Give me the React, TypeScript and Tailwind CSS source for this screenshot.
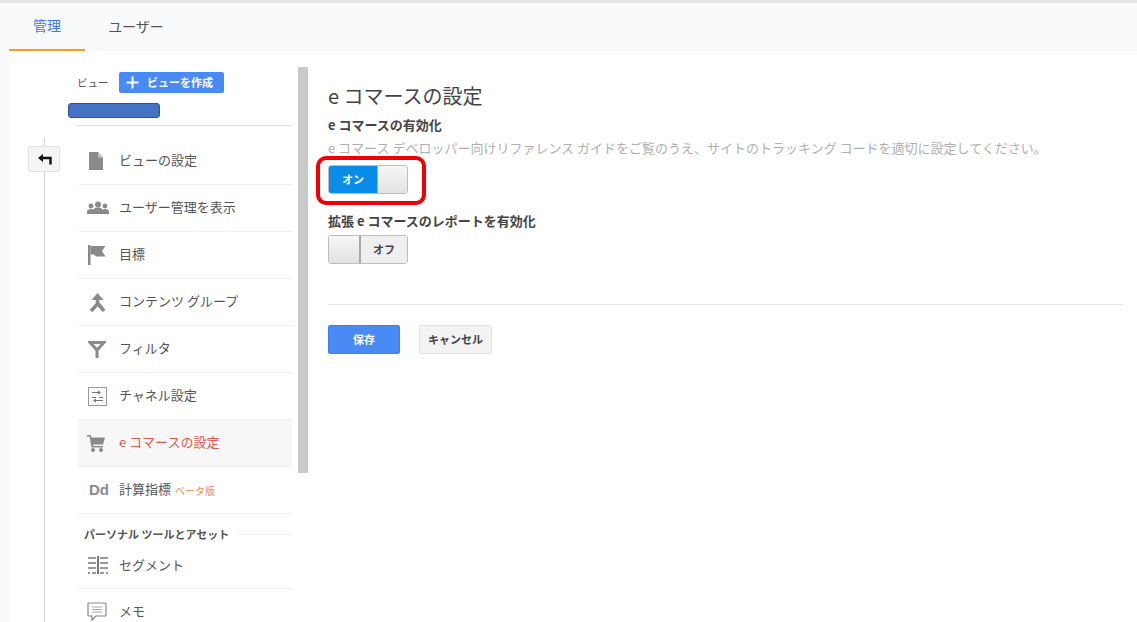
const font = '[font-family:"Noto_Sans_CJK_JP","Liberation_Sans",sans-serif]'

function DocIcon() {
  return (
    <svg width="18" height="18" viewBox="0 0 18 18" fill="#8a8a8a">
      <path d="M2 0h9l5 5.5V18H2z" />
      <path d="M11 0v5.5h5z" fill="#c4c4c4" />
    </svg>
  )
}

function PeopleIcon() {
  return (
    <svg width="22" height="16" viewBox="0 0 22 16" fill="#8a8a8a">
      <circle cx="4" cy="6" r="2.4" />
      <circle cx="11" cy="4.5" r="3" />
      <circle cx="18" cy="6" r="2.4" />
      <path d="M0 14v-2.500C0 10 2 9 4 9s4 1 4 2.500V14zM6 14v-3c0-2 2.500-3.500 5-3.500s5 1.500 5 3.500v3zM14 14v-2.500C14 10 16 9 18 9s4 1 4 2.500V14z" />
    </svg>
  )
}

function FlagIcon() {
  return (
    <svg className="ml-[1px]" width="18" height="20" viewBox="0 0 18 20" fill="#8a8a8a">
      <path d="M0 0h2.500v20H0z" />
      <path d="M2.500 1h15l-3.500 5 3.500 5.500H8l-2-2H2.500z" />
    </svg>
  )
}

function MergeIcon() {
  return (
    <svg className="ml-[2px]" width="17" height="19" viewBox="0 0 17 19" fill="none" stroke="#8a8a8a" strokeWidth="3.600">
      <path d="M8.500 5v6L2 18" />
      <path d="M8.500 10l6.500 8" />
      <path d="M8.500 0L14.500 7H2.500z" fill="#8a8a8a" stroke="none" />
    </svg>
  )
}

function FilterIcon() {
  return (
    <svg className="ml-[1px]" width="18" height="17" viewBox="0 0 18 17" fill="none" stroke="#8a8a8a" strokeWidth="3">
      <path d="M2 1.500h14L9 9z" />
      <path d="M9 8v9" />
    </svg>
  )
}

function ChannelIcon() {
  return (
    <svg className="ml-[1px]" width="19" height="19" viewBox="0 0 19 19" fill="none" stroke="#777" strokeWidth="1">
      <rect x="0.500" y="0.500" width="18" height="18" fill="#fafafa" stroke="#999" />
      <path d="M4 5.500h6M8 13.500h7M4 10.500h4M11 10.500h4" strokeWidth="1.200" />
      <path d="M10 3.500l3 2-3 2zM8 11.500l-3 2 3 2z" fill="#777" stroke="none" />
    </svg>
  )
}

function CartIcon() {
  return (
    <svg width="18" height="17" viewBox="0 0 18 17" fill="#8a8a8a">
      <path d="M0 0h3.500l1 2.500H18l-2 7H6l.4 1.500H16v1.500H4.500L2.500 1.500H0z" />
      <circle cx="6" cy="15" r="2" />
      <circle cx="14" cy="15" r="2" />
    </svg>
  )
}

function SegmentIcon() {
  return (
    <svg className="ml-[1px]" width="20" height="18" viewBox="0 0 20 18" fill="none" stroke="#777" strokeWidth="1.500">
      <path d="M10 0v18" strokeWidth="2" />
      <path d="M0 2h8M0 7h8M0 12h8M12 2h8M12 7h8M12 12h8" />
      <path d="M0 17h2M4 17h4M12 17h4M18 17h2" />
    </svg>
  )
}

function MemoIcon() {
  return (
    <svg width="20" height="20" viewBox="0 0 20 20" fill="none" stroke="#888" strokeWidth="1.200">
      <path d="M2 1h16a1 1 0 0 1 1 1v11a1 1 0 0 1-1 1H9l-4 4v-4H2a1 1 0 0 1-1-1V2a1 1 0 0 1 1-1z" />
      <path d="M5 5h10M5 7.500h10M5 10h10" stroke="#aaa" />
    </svg>
  )
}

function MenuRow({ icon, label, active, extra }: { icon: React.ReactNode; label: string; active?: boolean; extra?: string }) {
  return (
    <div className={`flex items-center h-[47px] border-b border-[#efefef] pl-[9px] ${active ? "bg-[#f7f7f7]" : ""}`}>
      <div className="w-[32px] flex-shrink-0 flex items-center">{icon}</div>
      <span className={`text-[13px] pb-[2px] ${active ? "text-[#e2574c]" : "text-[#555]"}`}>{label}</span>
      {extra && <span className="ml-[4px] text-[10px] text-[#ee8c4a]">{extra}</span>}
    </div>
  )
}

function Toggle({ on }: { on: boolean }) {
  return (
    <div className="flex w-[80px] h-[29px] rounded-[3px] border border-[#bdbdbd] overflow-hidden">
      {on ? (
        <>
          <div className="w-[48px] flex items-center justify-center bg-[#0a8ce9] text-white text-[11px] font-bold">オン</div>
          <div className="flex-1 border-l border-[#a8a8a8] bg-gradient-to-b from-[#f6f6f6] to-[#e2e2e2]" />
        </>
      ) : (
        <>
          <div className="w-[32px] border-r-2 border-[#a8a8a8] bg-gradient-to-b from-[#f6f6f6] to-[#e2e2e2]" />
          <div className="flex-1 flex items-center justify-center bg-[#efefef] text-[#444] text-[11px] font-bold">オフ</div>
        </>
      )}
    </div>
  )
}

export default function App() {
  return (
    <div className={`h-[622px] overflow-hidden flex flex-col bg-[#f8f9fa] border-t-[3px] border-[#e3e4e6] ${font}`}>
      {/* Tabs */}
      <div className="h-[48px] flex-shrink-0 flex pl-[9px] text-[14px]">
        <div className="w-[76px] flex items-center justify-center border-b-2 border-[#f9a01b] text-[#3b78e7] pb-[2px]">管理</div>
        <div className="w-[102px] flex items-center justify-center text-[#555] pb-[2px]">ユーザー</div>
      </div>

      <div className="flex-1 min-h-0 ml-[9px] bg-white flex">
        {/* Left column */}
        <div className="w-[299px] flex-shrink-0 flex relative">
          <div className="absolute left-[35px] top-[87px] bottom-0 w-px bg-[#d4d4d4]" />
          <div className="w-[69px] flex-shrink-0 pl-[19px] pt-[95px]">
            <div className="relative w-[32px] h-[26px] bg-[#f5f5f5] border border-[#e2e2e2] rounded-[2px] flex items-center justify-center">
              <svg width="15" height="11" viewBox="0 0 15 11" fill="none" stroke="#111" strokeWidth="2.400">
                <path d="M13.500 10.500V4H3" />
                <path d="M6 0L1 4l5 4z" fill="#111" stroke="none" />
              </svg>
            </div>
          </div>

          <div className="w-[214px] flex-shrink-0">
            <div className="h-[87px] relative">
              <div className="flex items-center pt-[21px] -ml-[1px]">
                <span className="text-[10.5px] text-[#555] w-[42px]">ビュー</span>
                <div className="w-[105px] h-[21px] rounded-[2px] bg-[#4a8af4] flex items-center text-white text-[11px] font-bold">
                  <svg className="ml-[7px] mr-[8px]" width="13" height="13" viewBox="0 0 13 13" fill="none" stroke="#fff" strokeWidth="2">
                    <path d="M6.500 0.500v12M0.500 6.500h12" />
                  </svg>
                  ビューを作成
                </div>
              </div>
              <div className="w-[92px] h-[15px] mt-[10px] -ml-[10px] rounded-[3px] bg-[#4472c4] border border-[#2f528f]" />
              <div className="absolute bottom-[12px] -left-[2px] right-0 h-px bg-[#dedede]" />
            </div>

            <MenuRow icon={<DocIcon />} label="ビューの設定" />
            <MenuRow icon={<PeopleIcon />} label="ユーザー管理を表示" />
            <MenuRow icon={<FlagIcon />} label="目標" />
            <MenuRow icon={<MergeIcon />} label="コンテンツ グループ" />
            <MenuRow icon={<FilterIcon />} label="フィルタ" />
            <MenuRow icon={<ChannelIcon />} label="チャネル設定" />
            <MenuRow icon={<CartIcon />} label="e コマースの設定" active />
            <MenuRow icon={<span className="ml-[2px] text-[15px] font-bold text-[#8a8a8a] [font-family:'Liberation_Sans',sans-serif]">Dd</span>} label="計算指標" extra="ベータ版" />

            <div className="flex items-center h-[38px] pl-[6px] pt-[3px]">
              <span className="text-[11px] font-bold text-[#555]">パーソナル ツールとアセット</span>
              <div className="flex-1 h-px bg-[#efefef] ml-[9px]" />
            </div>
            <div className="flex items-center h-[37px] border-b border-[#efefef] pl-[9px] pb-[11px]">
              <div className="w-[32px] flex-shrink-0"><SegmentIcon /></div>
              <span className="text-[13px] text-[#555]">セグメント</span>
            </div>
            <MenuRow icon={<MemoIcon />} label="メモ" />
          </div>

          <div className="w-[10px] h-[406px] mt-[16px] ml-[6px] bg-[#c9c9c9]" />
        </div>

        {/* Main */}
        <div className="flex-1 min-w-0 pl-[20px] pr-[14px] pt-[31px]">
          <h1 className="text-[20px] leading-[28px] text-[#444]">e コマースの設定</h1>
          <h2 className="mt-[6px] text-[13px] leading-[18px] font-bold text-[#444]">e コマースの有効化</h2>
          <p className="mt-[5px] text-[13px] leading-[18px] text-[#b0b0b0] whitespace-nowrap">
            e コマース デベロッパー向けリファレンス ガイドをご覧のうえ、サイトのトラッキング コードを適切に設定してください。
          </p>
          <div className="relative mt-[8px] w-[80px]">
            <Toggle on />
            <div className="absolute -left-[12px] -top-[9px] w-[110px] h-[49px] border-[4px] border-[#f00000] rounded-[10px]" />
          </div>
          <h2 className="mt-[18px] text-[13px] leading-[18px] font-bold text-[#444]">拡張 e コマースのレポートを有効化</h2>
          <div className="mt-[5px]"><Toggle on={false} /></div>
          <div className="mt-[40px] h-px bg-[#e2e2e2]" />
          <div className="mt-[20px] flex items-center gap-[19px]">
            <div className="w-[72px] h-[29px] rounded-[2px] bg-[#4a8af4] border border-[#3f7fe8] flex items-center justify-center text-white text-[11px] font-bold">保存</div>
            <div className="w-[73px] h-[29px] rounded-[2px] bg-[#f3f3f3] border border-[#e2e2e2] flex items-center justify-center text-[#444] text-[11px] font-bold">キャンセル</div>
          </div>
        </div>
      </div>
    </div>
  )
}
